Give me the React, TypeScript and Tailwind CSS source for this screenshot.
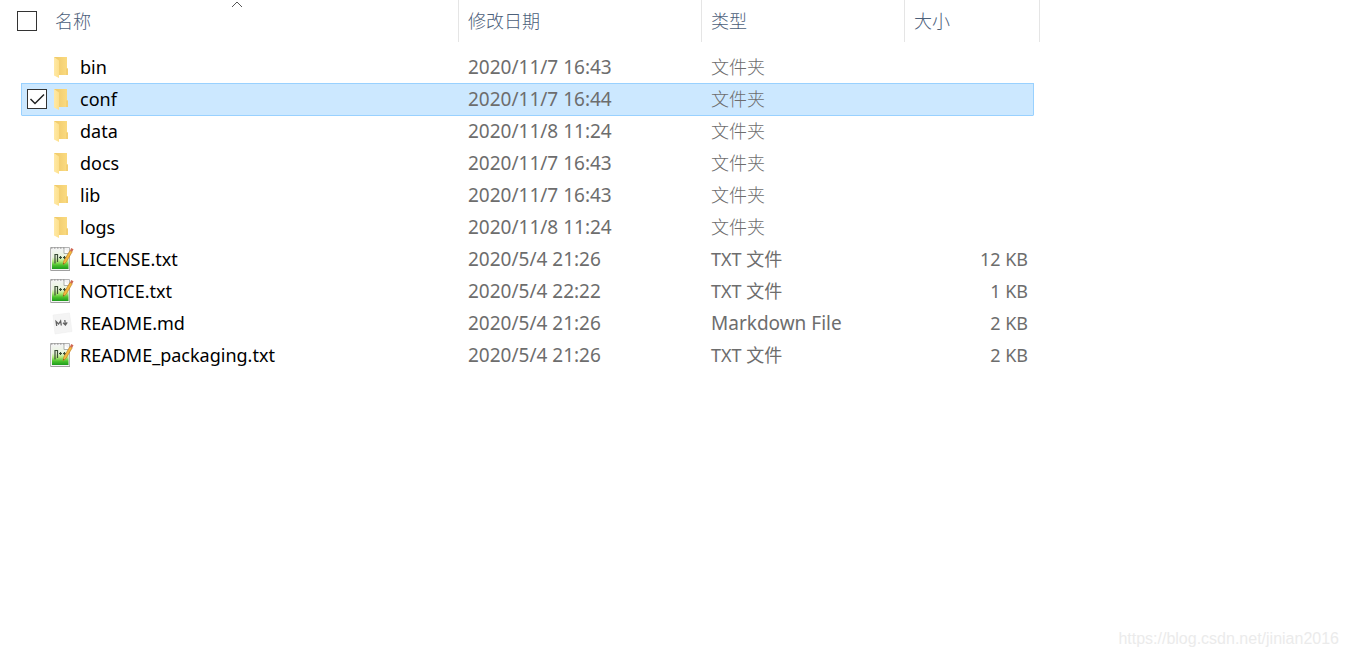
import { useState } from "react";
import clsx from "clsx";

type FileKind = "folder" | "text" | "markdown";

interface FileEntry {
  name: string;
  modified: string;
  type: string;
  size: string;
  kind: FileKind;
}

const files: FileEntry[] = [
  { name: "bin", modified: "2020/11/7 16:43", type: "文件夹", size: "", kind: "folder" },
  { name: "conf", modified: "2020/11/7 16:44", type: "文件夹", size: "", kind: "folder" },
  { name: "data", modified: "2020/11/8 11:24", type: "文件夹", size: "", kind: "folder" },
  { name: "docs", modified: "2020/11/7 16:43", type: "文件夹", size: "", kind: "folder" },
  { name: "lib", modified: "2020/11/7 16:43", type: "文件夹", size: "", kind: "folder" },
  { name: "logs", modified: "2020/11/8 11:24", type: "文件夹", size: "", kind: "folder" },
  { name: "LICENSE.txt", modified: "2020/5/4 21:26", type: "TXT 文件", size: "12 KB", kind: "text" },
  { name: "NOTICE.txt", modified: "2020/5/4 22:22", type: "TXT 文件", size: "1 KB", kind: "text" },
  { name: "README.md", modified: "2020/5/4 21:26", type: "Markdown File", size: "2 KB", kind: "markdown" },
  { name: "README_packaging.txt", modified: "2020/5/4 21:26", type: "TXT 文件", size: "2 KB", kind: "text" },
];

const typeStyles: Record<FileKind, string> = {
  folder: "font-light",
  text: "font-normal",
  markdown: "text-[19px] font-normal",
};

function FolderIcon() {
  return (
    <svg viewBox="0 0 24 24" className="size-6 shrink-0">
      <defs>
        <linearGradient id="folder-back" x1="0" x2="1">
          <stop offset="0" stopColor="#efc868" />
          <stop offset="1" stopColor="#fbdc83" />
        </linearGradient>
        <linearGradient id="folder-front" x1="0" x2="1">
          <stop offset="0" stopColor="#ffe9a6" />
          <stop offset="1" stopColor="#fde08d" />
        </linearGradient>
      </defs>
      <path d="M4 2h13v11l1 1v6H4z" fill="url(#folder-back)" />
      <path d="M16 13.500h2v6.500h-2z" fill="#f3cf73" />
      <path d="M4 2l5 3.500V23l-5-2.500z" fill="url(#folder-front)" />
    </svg>
  );
}

function TextIcon() {
  return (
    <svg viewBox="0 0 24 24" className="size-6 shrink-0">
      <defs>
        <linearGradient id="text-page" x1="0" y1="0" x2="0" y2="1">
          <stop offset="0" stopColor="#f2f4f1" />
          <stop offset="0.400" stopColor="#e9f5dc" />
          <stop offset="0.600" stopColor="#b4ea7c" />
          <stop offset="0.800" stopColor="#4cc32c" />
          <stop offset="1" stopColor="#1d9a1d" />
        </linearGradient>
      </defs>
      <path d="M.5.500h19v23H.5z" fill="#f3f3f3" stroke="#b4b4b4" />
      <path d="M2 2.500h12.500l4 4V22H2z" fill="url(#text-page)" />
      <path d="M14 1.500v5h5" fill="#fff" stroke="#9a9f9a" strokeWidth="0.800" />
      <path d="M1 1h14" stroke="#8a8a8a" strokeDasharray="1.500 1.500" />
      <path d="M1 23.500h19" stroke="#a0a0a0" />
      <path d="M5 16.500V7.500h2.500V15" fill="none" stroke="#3b4d36" strokeWidth="1.200" />
      <path d="M9 10.500h3M10.500 9v3M13 10.500h3M14.500 9v3" stroke="#3b4d36" strokeWidth="1.200" />
      <path d="M20 3.500l-6.200 10.500-.6 3.500 2.800-2.200L22.200 4.800z" fill="#f6b941" stroke="#c4811f" strokeWidth="0.700" />
      <path d="M20 3.500l1.200-2.500 2.300 1.200-1.300 2.600z" fill="#cf6753" />
      <path d="M13.400 16.200l-.2 1.300 1.200-.9z" fill="#3b3322" />
    </svg>
  );
}

function MarkdownIcon() {
  return (
    <svg viewBox="0 0 24 24" className="size-6 shrink-0">
      <path d="M3 4L19.500 2 22 20.500 5 23z" fill="#f4f4f4" stroke="#ececec" strokeWidth="0.500" />
      <g fill="none" stroke="#626262" strokeWidth="1.300">
        <path d="M6.700 15l-.6-4.500 2.500 2.500 2-3 .7 4.500" />
        <path d="M14.800 9l.6 5M13 11.800l2.400 2.200 1.800-2.700" />
      </g>
    </svg>
  );
}

const icons = { folder: FolderIcon, text: TextIcon, markdown: MarkdownIcon };

interface CheckProps {
  label: string;
  checked: boolean;
  hidden?: boolean;
  onChange: () => void;
}

function Check({ label, checked, hidden, onChange }: CheckProps) {
  return (
    <span className={clsx("grid size-5 shrink-0", hidden && "opacity-0 hover:opacity-100")}>
      <input
        type="checkbox"
        aria-label={label}
        checked={checked}
        onChange={onChange}
        className="col-start-1 row-start-1 size-5 appearance-none border border-[#333] bg-white"
      />
      {checked && (
        <svg viewBox="0 0 20 20" className="pointer-events-none col-start-1 row-start-1 size-5">
          <path d="M3.500 10l4.500 4.500 9-9" fill="none" stroke="#222" strokeWidth="1.500" />
        </svg>
      )}
    </span>
  );
}

export default function App() {
  const [selected, setSelected] = useState<string[]>(["conf"]);
  const allSelected = selected.length === files.length;

  const toggle = (name: string) => {
    setSelected((prev) =>
      prev.includes(name) ? prev.filter((n) => n !== name) : [...prev, name]
    );
  };

  return (
    <div className="flex min-h-screen flex-col justify-between bg-white font-['Noto_Sans','Noto_Sans_CJK_SC',sans-serif] text-lg leading-6">
      <table className="w-full table-fixed border-separate border-spacing-0 whitespace-nowrap">
        <colgroup>
          <col className="w-[21px]" />
          <col className="w-[437px]" />
          <col className="w-[243px]" />
          <col className="w-[203px]" />
          <col className="w-[130px]" />
          <col className="w-[6px]" />
          <col />
        </colgroup>
        <thead>
          <tr className="h-[42px] text-left text-[#4c607a]">
            <th colSpan={2} className="relative p-0 font-light">
              {/* Sort arrow */}
              <span className="absolute inset-x-0 top-0 flex justify-center pl-4">
                <svg viewBox="0 0 12 8" className="h-2 w-3">
                  <path d="M1 7l5-5 5 5" fill="none" stroke="#555" />
                </svg>
              </span>
              <div className="flex items-center gap-[18px] pl-[17px]">
                <Check
                  label="全选"
                  checked={allSelected}
                  onChange={() => setSelected(allSelected ? [] : files.map((f) => f.name))}
                />
                名称
              </div>
            </th>
            <th className="border-l border-[#e5e5e5] p-0 pl-[9px] font-light">修改日期</th>
            <th className="border-l border-[#e5e5e5] p-0 pl-[9px] font-light">类型</th>
            <th className="border-l border-[#e5e5e5] p-0 pl-[9px] font-light">大小</th>
            <th className="border-r border-[#e5e5e5] p-0" />
            <th />
          </tr>
        </thead>
        <tbody className="before:block before:h-[9px]">
          {files.map((file, i) => {
            const isSelected = selected.includes(file.name);
            const afterSelected = i > 0 && selected.includes(files[i - 1].name);
            const Icon = icons[file.kind];
            // The top edge of the next row closes the selection frame
            const cell = clsx(
              "border-t pt-0 pb-0.5",
              isSelected || afterSelected ? "border-t-[#99d1ff]" : "border-t-transparent",
              isSelected && "bg-[#cce8ff]"
            );
            return (
              <tr key={file.name} className="h-8 text-[#6d6d6d]">
                <td className="p-0" />
                <td className={clsx(cell, "border-l px-0", isSelected ? "border-l-[#99d1ff]" : "border-l-transparent")}>
                  <div className="flex items-center pl-[5px]">
                    <Check
                      label={file.name}
                      checked={isSelected}
                      hidden={!isSelected}
                      onChange={() => toggle(file.name)}
                    />
                    <span className="pr-[6px] pl-[3px]">
                      <Icon />
                    </span>
                    <span className="text-black">{file.name}</span>
                  </div>
                </td>
                <td className={clsx(cell, "pr-0 pl-[10px] text-[19px]")}>{file.modified}</td>
                <td className={clsx(cell, "pr-0 pl-[10px]", typeStyles[file.kind])}>{file.type}</td>
                <td
                  className={clsx(
                    cell,
                    "border-r pr-[5px] pl-0 text-right",
                    isSelected ? "border-r-[#99d1ff]" : "border-r-transparent"
                  )}
                >
                  {file.size}
                </td>
                <td />
                <td />
              </tr>
            );
          })}
        </tbody>
      </table>
      <footer className="px-2 pb-1.5 text-right font-['Liberation_Sans',sans-serif] text-base text-[#ebebeb]">
        https://blog.csdn.net/jinian2016
      </footer>
    </div>
  );
}
